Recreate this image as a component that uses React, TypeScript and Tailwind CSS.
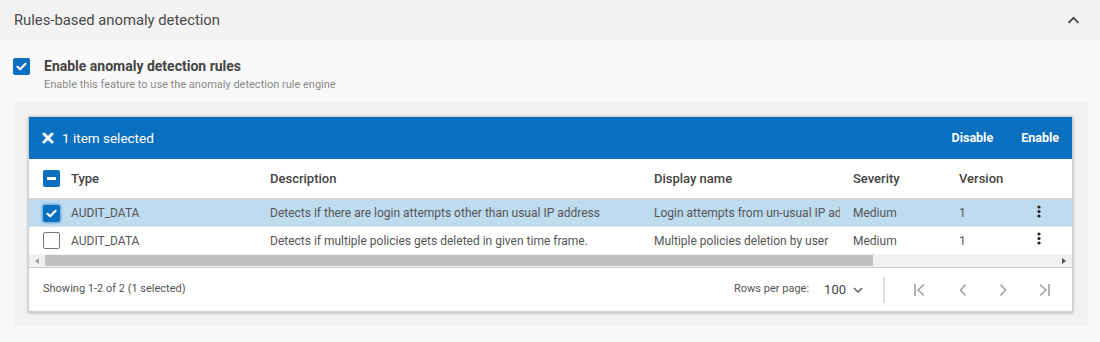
import React from "react";

const font = { fontFamily: "Roboto, 'Noto Sans', Arial, sans-serif" };

function Kebab() {
  return (
    <svg width="4" height="13" viewBox="0 0 4 13" className="block">
      <circle cx="2" cy="2" r="1.6" fill="#222" />
      <circle cx="2" cy="6.5" r="1.6" fill="#222" />
      <circle cx="2" cy="11" r="1.6" fill="#222" />
    </svg>
  );
}

function CheckBlue({ glow }: { glow?: boolean }) {
  return (
    <div
      className={
        "w-[17px] h-[17px] rounded-[2px] bg-[#0b6fc0] flex items-center justify-center " +
        (glow ? "shadow-[0_0_3px_1px_rgba(11,111,192,0.55)]" : "")
      }
    >
      <svg width="11" height="9" viewBox="0 0 11 9">
        <path d="M1.5 4.8 L4.2 7.3 L9.5 1.8" stroke="#fff" strokeWidth="2.2" fill="none" strokeLinecap="round" strokeLinejoin="round" />
      </svg>
    </div>
  );
}

export default function App() {
  const cols = "grid grid-cols-[42px_199px_384px_199px_106px_78px_1fr] items-center";
  return (
    <div style={font} className="w-[1100px] h-[342px] bg-[#f9f9f9] overflow-hidden">
      <div className="h-[40px] bg-[#f2f2f2] flex items-center justify-between pl-[14px] pr-[20px]">
        <span className="text-[14.8px] text-[#4a4a4a]">Rules-based anomaly detection</span>
        <svg width="13" height="8" viewBox="0 0 13 8">
          <path d="M1.5 6.8 L6.5 1.8 L11.5 6.8" stroke="#444" strokeWidth="1.8" fill="none" />
        </svg>
      </div>
      <div className="pt-[18px] pl-[13px] flex gap-[14px]">
        <div>
          <CheckBlue />
        </div>
        <div className="flex flex-col">
          <span className="text-[14px] font-bold text-[#444] leading-[17px]">Enable anomaly detection rules</span>
          <span className="text-[11px] text-[#8a8a8a] leading-[14px] mt-[3px]">
            Enable this feature to use the anomaly detection rule engine
          </span>
        </div>
      </div>
      <div className="mt-[10px] ml-[14px] mr-[12px] bg-[#f2f2f2] pt-[14px] pb-[14px] px-[14px] pr-[15px]">
        <div className="bg-white border border-[#cfcfcf] shadow-[0_1px_3px_rgba(0,0,0,0.25)] overflow-hidden">
          <div className="h-[42px] bg-[#0b6fc0] flex items-center pl-[13px] pr-[13px] text-white">
            <svg width="12" height="12" viewBox="0 0 12 12" className="mr-[8px]">
              <path d="M2 2 L10 10 M10 2 L2 10" stroke="#fff" strokeWidth="3" strokeLinecap="round" />
            </svg>
            <span className="text-[13.5px]">1 item selected</span>
            <div className="flex-1" />
            <span className="text-[12.5px] font-bold">Disable</span>
            <span className="text-[12.5px] font-bold ml-[28px]">Enable</span>
          </div>
          <div className="w-[1290px]">
            <div className={cols + " h-[41px] border-b-2 border-[#d4d4d4] text-[13px] font-medium text-[#444]"}>
              <div className="pl-[14px]">
                <div className="w-[17px] h-[17px] rounded-[2px] bg-[#0b6fc0] flex items-center justify-center">
                  <div className="w-[9px] h-[2.5px] bg-white" />
                </div>
              </div>
              <div>Type</div>
              <div>Description</div>
              <div>Display name</div>
              <div>Severity</div>
              <div>Version</div>
              <div />
            </div>
            <div className={cols + " h-[27px] bg-[#bfdbf0] text-[12px] text-[#555] border-b border-[#e0e0e0]"}>
              <div className="pl-[14px]">
                <CheckBlue glow />
              </div>
              <div>AUDIT_DATA</div>
              <div>Detects if there are login attempts other than usual IP address</div>
              <div>
                <div className="w-[186px] overflow-hidden whitespace-nowrap">Login attempts from un-usual IP address</div>
              </div>
              <div>Medium</div>
              <div>1</div>
              <div className="-mt-[4px]">
                <Kebab />
              </div>
            </div>
            <div className={cols + " h-[27px] text-[12px] text-[#555]"}>
              <div className="pl-[14px]">
                <div className="w-[17px] h-[17px] rounded-[2px] border border-[#777] bg-white" />
              </div>
              <div>AUDIT_DATA</div>
              <div>Detects if multiple policies gets deleted in given time frame.</div>
              <div>
                <div className="w-[186px] overflow-hidden whitespace-nowrap">Multiple policies deletion by user</div>
              </div>
              <div>Medium</div>
              <div>1</div>
              <div className="-mt-[4px]">
                <Kebab />
              </div>
            </div>
          </div>
          <div className="h-[14px] bg-[#f1f1f1] flex items-center border-b border-[#d0d0d0]">
            <div className="w-[16px] flex items-center justify-center">
              <svg width="4" height="6" viewBox="0 0 4 6"><path d="M4 0 L0 3 L4 6 Z" fill="#a3a3a3" /></svg>
            </div>
            <div className="w-[828px] h-[11px] bg-[#c1c1c1]" />
            <div className="flex-1" />
            <div className="w-[16px] flex items-center justify-center">
              <svg width="4" height="6" viewBox="0 0 4 6"><path d="M0 0 L4 3 L0 6 Z" fill="#505050" /></svg>
            </div>
          </div>
          <div className="h-[43px] flex items-center pl-[14px] pr-[21px]">
            <span className="text-[11px] text-[#555]">Showing 1-2 of 2 (1 selected)</span>
            <div className="flex-1" />
            <span className="text-[11px] text-[#555]">Rows per page:</span>
            <span className="text-[13px] text-[#444] ml-[15px]">100</span>
            <svg width="10" height="6" viewBox="0 0 10 6" className="ml-[7px]">
              <path d="M1 1 L5 5 L9 1" stroke="#555" strokeWidth="1.3" fill="none" />
            </svg>
            <div className="w-[2px] h-[26px] bg-[#dedede] ml-[20px] mr-[28px]" />
            <svg width="14" height="14" viewBox="0 0 14 14">
              <path d="M2 1 V13 M11 1.5 L5 7 L11 12.5" stroke="#a0a0a0" strokeWidth="1.6" fill="none" />
            </svg>
            <svg width="10" height="14" viewBox="0 0 10 14" className="ml-[31px]">
              <path d="M7.5 1.5 L2.5 7 L7.5 12.5" stroke="#a0a0a0" strokeWidth="1.6" fill="none" />
            </svg>
            <svg width="10" height="14" viewBox="0 0 10 14" className="ml-[30px]">
              <path d="M2.5 1.5 L7.5 7 L2.5 12.5" stroke="#a0a0a0" strokeWidth="1.6" fill="none" />
            </svg>
            <svg width="14" height="14" viewBox="0 0 14 14" className="ml-[29px]">
              <path d="M12 1 V13 M3 1.5 L9 7 L3 12.5" stroke="#a0a0a0" strokeWidth="1.6" fill="none" />
            </svg>
          </div>
        </div>
      </div>
    </div>
  );
}
